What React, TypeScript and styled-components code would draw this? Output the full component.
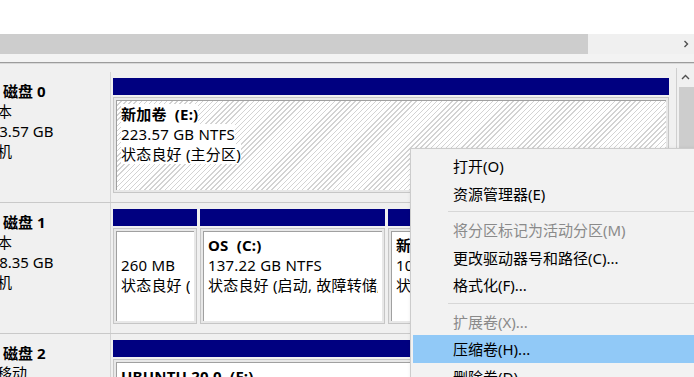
import styled, { createGlobalStyle } from "styled-components";

const GlobalStyle = createGlobalStyle`
    html, body {
        margin: 0;
        padding: 0;
        background: #ffffff;
        overflow: hidden;
    }
    body {
        font-family: "Noto Sans", "Noto Sans CJK SC", sans-serif;
        font-size: 15px;
        color: #000;
    }
`;

type Part = {
    width?: number;
    title?: string;
    size?: string;
    status: string;
    hatched?: boolean;
};

type Disk = {
    name: string;
    kind: string;
    size: string;
    state: string;
    parts: Part[];
};

const disks: Disk[] = [
    {
        name: "磁盘 0",
        kind: "基本",
        size: "223.57 GB",
        state: "联机",
        parts: [
            {
                title: "新加卷  (E:)",
                size: "223.57 GB NTFS",
                status: "状态良好 (主分区)",
                hatched: true,
            },
        ],
    },
    {
        name: "磁盘 1",
        kind: "基本",
        size: "238.35 GB",
        state: "联机",
        parts: [
            { width: 84, size: "260 MB", status: "状态良好 (EFI 系统分区)" },
            {
                width: 185,
                title: "OS  (C:)",
                size: "137.22 GB NTFS",
                status: "状态良好 (启动, 故障转储, 主分区)",
            },
            {
                title: "新加卷  (D:)",
                size: "100.86 GB NTFS",
                status: "状态良好 (主分区)",
            },
        ],
    },
    {
        name: "磁盘 2",
        kind: "可移动",
        size: "28.64 GB",
        state: "联机",
        parts: [
            {
                title: "UBUNTU 20.0  (F:)",
                size: "28.64 GB FAT32",
                status: "状态良好 (活动, 主分区)",
            },
        ],
    },
];

type MenuEntry =
    | { sep: true }
    | { label: string; disabled?: boolean; active?: boolean };

const menu: MenuEntry[] = [
    { label: "打开(O)" },
    { label: "资源管理器(E)" },
    { sep: true },
    { label: "将分区标记为活动分区(M)", disabled: true },
    { label: "更改驱动器号和路径(C)..." },
    { label: "格式化(F)..." },
    { sep: true },
    { label: "扩展卷(X)...", disabled: true },
    { label: "压缩卷(H)...", active: true },
    { label: "删除卷(D)..." },
];

const DiskIcon = () => (
    <svg width="16" height="16" viewBox="0 0 16 16">
        <rect x="1" y="5" width="14" height="7" rx="1" fill="#9a9a9a" />
        <rect x="2" y="6" width="12" height="3" fill="#d8d8d8" />
        <circle cx="12.5" cy="10.5" r="0.8" fill="#3cb043" />
    </svg>
);

export default function App() {
    return (
        <Window>
            <GlobalStyle />
            <VolumeList />
            <HScroll>
                <HThumb />
                <ScrollArrow>
                    <svg width="8" height="8" viewBox="0 0 8 8">
                        <path d="M2.5 1 L5.5 4 L2.5 7" fill="none" stroke="#505050" strokeWidth="1.4" />
                    </svg>
                </ScrollArrow>
            </HScroll>
            <Splitter />
            <LowerPane>
                <Disks>
                    {disks.map((d) => (
                        <DiskRow key={d.name}>
                            <DiskLabel>
                                <LabelInner>
                                    <LabelTitle>
                                        <DiskIcon />
                                        {d.name}
                                    </LabelTitle>
                                    <Line>{d.kind}</Line>
                                    <Line>{d.size}</Line>
                                    <Line>{d.state}</Line>
                                </LabelInner>
                            </DiskLabel>
                            <Partitions>
                                {d.parts.map((p, i) => (
                                    <Partition key={i} $width={p.width}>
                                        <PartBar />
                                        <PartBody>
                                            <PartInner $hatched={p.hatched}>
                                                <PartLine $bold>{p.title ?? "\u00a0"}</PartLine>
                                                <PartLine>{p.size}</PartLine>
                                                <PartLine>{p.status}</PartLine>
                                            </PartInner>
                                        </PartBody>
                                    </Partition>
                                ))}
                            </Partitions>
                        </DiskRow>
                    ))}
                </Disks>
                <VScroll>
                    <UpArrow>
                        <svg width="9" height="6" viewBox="0 0 9 6">
                            <path d="M1 5 L4.5 1.5 L8 5" fill="none" stroke="#505050" strokeWidth="1.4" />
                        </svg>
                    </UpArrow>
                    <VThumb />
                </VScroll>
            </LowerPane>
            <ContextMenu>
                {menu.map((m, i) =>
                    "sep" in m ? (
                        <MenuSep key={i} />
                    ) : (
                        <MenuItem key={i} $disabled={m.disabled} $active={m.active}>
                            {m.label}
                        </MenuItem>
                    )
                )}
            </ContextMenu>
        </Window>
    );
}

const Window = styled.div`
    position: relative;
    width: 694px;
    height: 377px;
    overflow: hidden;
    display: flex;
    flex-direction: column;
    background: #ffffff;
`;

const VolumeList = styled.div`
    height: 34px;
    background: #ffffff;
`;

const HScroll = styled.div`
    height: 20px;
    display: flex;
    background: #f0f0f0;
`;

const HThumb = styled.div`
    width: 588px;
    background: #cdcdcd;
`;

const ScrollArrow = styled.div`
    margin-left: auto;
    width: 17px;
    display: flex;
    align-items: center;
    justify-content: center;
`;

const Splitter = styled.div`
    height: 8px;
    background: #f3f3f3;
    border-bottom: 1px solid #9c9c9c;
    box-shadow: 0 1px 0 #d8d8d8;
`;

const LowerPane = styled.div`
    flex: 1;
    display: flex;
    margin-top: 1px;
    background: #f0f0f0;
    min-height: 0;
`;

const Disks = styled.div`
    flex: 1;
    padding-top: 8px;
    overflow: hidden;
`;

const DiskRow = styled.div`
    display: flex;
    height: 130px;
    border-bottom: 1px solid #c9c9c9;
`;

const DiskLabel = styled.div`
    width: 110px;
    border-right: 1px solid #d4d4d4;
    overflow: hidden;
    flex-shrink: 0;
`;

const LabelInner = styled.div`
    margin-left: -18px;
    padding-top: 9px;
    line-height: 20px;
    white-space: nowrap;
`;

const LabelTitle = styled.div`
    display: flex;
    align-items: center;
    gap: 5px;
    font-weight: 700;
`;

const Line = styled.div``;

const Partitions = styled.div`
    flex: 1;
    display: flex;
    gap: 3px;
    padding: 6px 7px 0 2px;
    min-width: 0;
`;

const Partition = styled.div<{ $width?: number }>`
    display: flex;
    flex-direction: column;
    ${(p) => (p.$width ? `width: ${p.$width}px; flex-shrink: 0;` : "flex: 1; min-width: 0;")}
`;

const PartBar = styled.div`
    height: 17px;
    background: #000080;
`;

const PartBody = styled.div`
    margin-top: 2px;
    height: 96px;
    box-sizing: border-box;
    border: 1px solid #c6c6c6;
    padding: 2px;
    background: #e8e8e8;
    display: flex;
`;

const PartInner = styled.div<{ $hatched?: boolean }>`
    flex: 1;
    min-width: 0;
    overflow: hidden;
    border-top: 1px solid #a0a0a0;
    border-left: 1px solid #a0a0a0;
    padding: 3px 4px 0;
    line-height: 20px;
    background: ${(p) =>
        p.$hatched
            ? "repeating-linear-gradient(135deg, #ffffff 0 2.6px, #d3d3d3 2.6px 3.6px)"
            : "#ffffff"};
`;

const PartLine = styled.div<{ $bold?: boolean }>`
    width: fit-content;
    max-width: 100%;
    background: #ffffff;
    white-space: pre;
    overflow: hidden;
    letter-spacing: 0.2px;
    font-weight: ${(p) => (p.$bold ? 700 : 400)};
`;

const VScroll = styled.div`
    width: 17px;
    flex-shrink: 0;
    margin-top: 4px;
    border-left: 1px solid #cfcfcf;
    background: #f0f0f0;
    display: flex;
    flex-direction: column;
`;

const UpArrow = styled.div`
    height: 17px;
    display: flex;
    align-items: center;
    justify-content: center;
`;

const VThumb = styled.div`
    margin: 2px 0 0 2px;
    flex: 1;
    background: #cdcdcd;
`;

const ContextMenu = styled.div`
    position: absolute;
    left: 410px;
    top: 148px;
    width: 285px;
    padding: 3px 2px;
    background: #f2f2f2;
    border: 1px solid #cccccc;
    box-shadow: 2px 2px 4px rgba(0, 0, 0, 0.25);
    font-family: "Noto Sans", "Noto Sans CJK SC", sans-serif;
    font-size: 15px;
`;

const MenuItem = styled.div<{ $disabled?: boolean; $active?: boolean }>`
    height: 27.5px;
    display: flex;
    align-items: center;
    padding-left: 40px;
    color: ${(p) => (p.$disabled ? "#8a8a8a" : "#000000")};
    background: ${(p) => (p.$active ? "#91c9f7" : "transparent")};
    white-space: nowrap;
`;

const MenuSep = styled.div`
    height: 9px;
    margin-left: 35px;
    background: linear-gradient(#d7d7d7, #d7d7d7) no-repeat 0 4px / 100% 1px;
`;
